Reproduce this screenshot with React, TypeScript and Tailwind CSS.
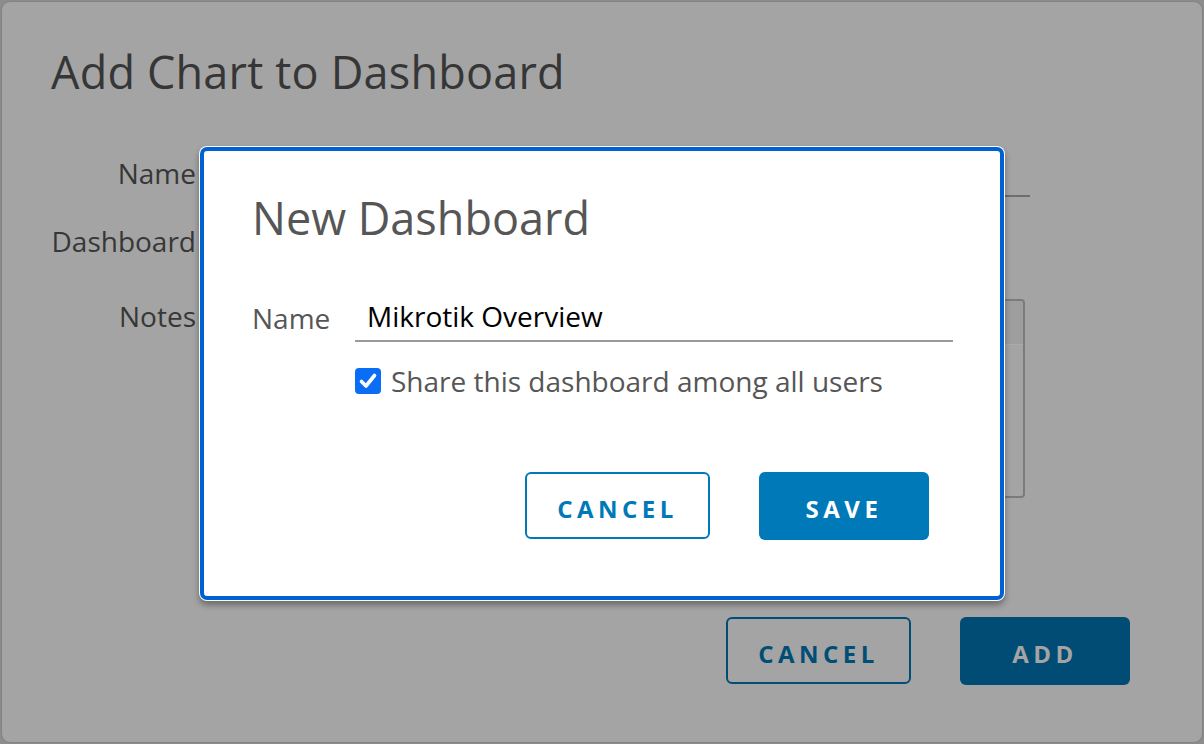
import React from "react";

const font = { fontFamily: '"Open Sans", "Liberation Sans", sans-serif' };

export default function App() {
  return (
    <div
      className="relative w-[1204px] h-[744px] overflow-hidden bg-[#8d8d8d] p-[2px] flex"
      style={font}
    >
      {/* Outer (dimmed) modal */}
      <div className="flex-1 flex flex-col rounded-[8px] bg-[#a4a4a4] shadow-[0_0_2px_rgba(0,0,0,0.25)] pl-[49px] pr-[72px] pt-[43px] pb-[57px]">
        <h1 className="text-[45px] leading-[54px] font-normal text-[#363636] tracking-[0.2px]">
          Add Chart to Dashboard
        </h1>

        <div className="mt-[54px] flex flex-col">
          <div className="flex items-start">
            <div className="w-[145px] text-right text-[28px] leading-[40px] text-[#373737]">Name</div>
            <div className="ml-[24px] flex-1 mr-[100px] h-[44px] border-b-2 border-[#6e6e6e]"></div>
          </div>
          <div className="mt-[24px] flex">
            <div className="w-[145px] text-right text-[28px] leading-[40px] text-[#373737]">Dashboard</div>
          </div>
          <div className="mt-[35px] flex items-start">
            <div className="w-[145px] text-right text-[28px] leading-[40px] text-[#373737]">Notes</div>
            <div className="ml-[24px] flex-1 mr-[105px] mt-[3px] h-[199px] rounded-[4px] border-2 border-[#7b7b7b] flex flex-col overflow-hidden">
              <div className="h-[44px] bg-[#9e9e9e] border-b border-[#ababab]"></div>
            </div>
          </div>
        </div>

        <div className="flex-1"></div>

        <div className="flex justify-end gap-[49px]">
          <button className="w-[185px] h-[67px] pt-[6px] rounded-[6px] border-2 border-[#004d76] text-[#004d76] text-[24px] font-bold tracking-[4.5px]">
            CANCEL
          </button>
          <button className="w-[170px] h-[68px] pt-[6px] rounded-[6px] bg-[#004c75] text-[#a4a4a4] text-[24px] font-bold tracking-[4.5px]">
            ADD
          </button>
        </div>
      </div>

      {/* Inner modal */}
      <div className="absolute left-[199px] top-[146px] w-[806px] h-[455px] rounded-[8px] bg-white p-[1px] shadow-[0_4px_6px_rgba(0,0,0,0.35)]">
        <div className="w-full h-full rounded-[7px] border-[4px] border-[#0062d0] bg-white flex flex-col pl-[48px] pr-[47px] pt-[40px]">
          <h2 className="text-[45px] leading-[54px] font-normal text-[#565656]">New Dashboard</h2>

          <div className="mt-[51px] flex items-end">
            <div className="w-[103px] text-[28px] leading-[40px] text-[#565656] pb-[4px]">Name</div>
            <div className="flex-1 border-b-2 border-[#9a9a9a] pl-[12px] pb-[4px] text-[28px] leading-[40px] text-black">
              Mikrotik Overview
            </div>
          </div>

          <div className="mt-[21px] ml-[103px] flex items-center gap-[10px]">
            <div className="w-[26px] h-[26px] rounded-[4px] bg-[#0a6df5] flex items-center justify-center">
              <svg width="22" height="22" viewBox="0 0 22 22">
                <path d="M4.5 11.5 L9 16 L17.5 5.5" fill="none" stroke="white" strokeWidth="3.6" strokeLinecap="round" strokeLinejoin="round" />
              </svg>
            </div>
            <div className="text-[28px] leading-[36px] text-[#565656]">Share this dashboard among all users</div>
          </div>

          <div className="mt-[73px] flex justify-end gap-[49px] pr-[24px]">
            <button className="w-[185px] h-[67px] pt-[6px] rounded-[6px] border-2 border-[#0079b8] text-[#0079b8] text-[24px] font-bold tracking-[4.5px] bg-white">
              CANCEL
            </button>
            <button className="w-[170px] h-[68px] pt-[6px] rounded-[6px] bg-[#0079b8] text-white text-[24px] font-bold tracking-[4.5px]">
              SAVE
            </button>
          </div>
        </div>
      </div>
    </div>
  );
}
